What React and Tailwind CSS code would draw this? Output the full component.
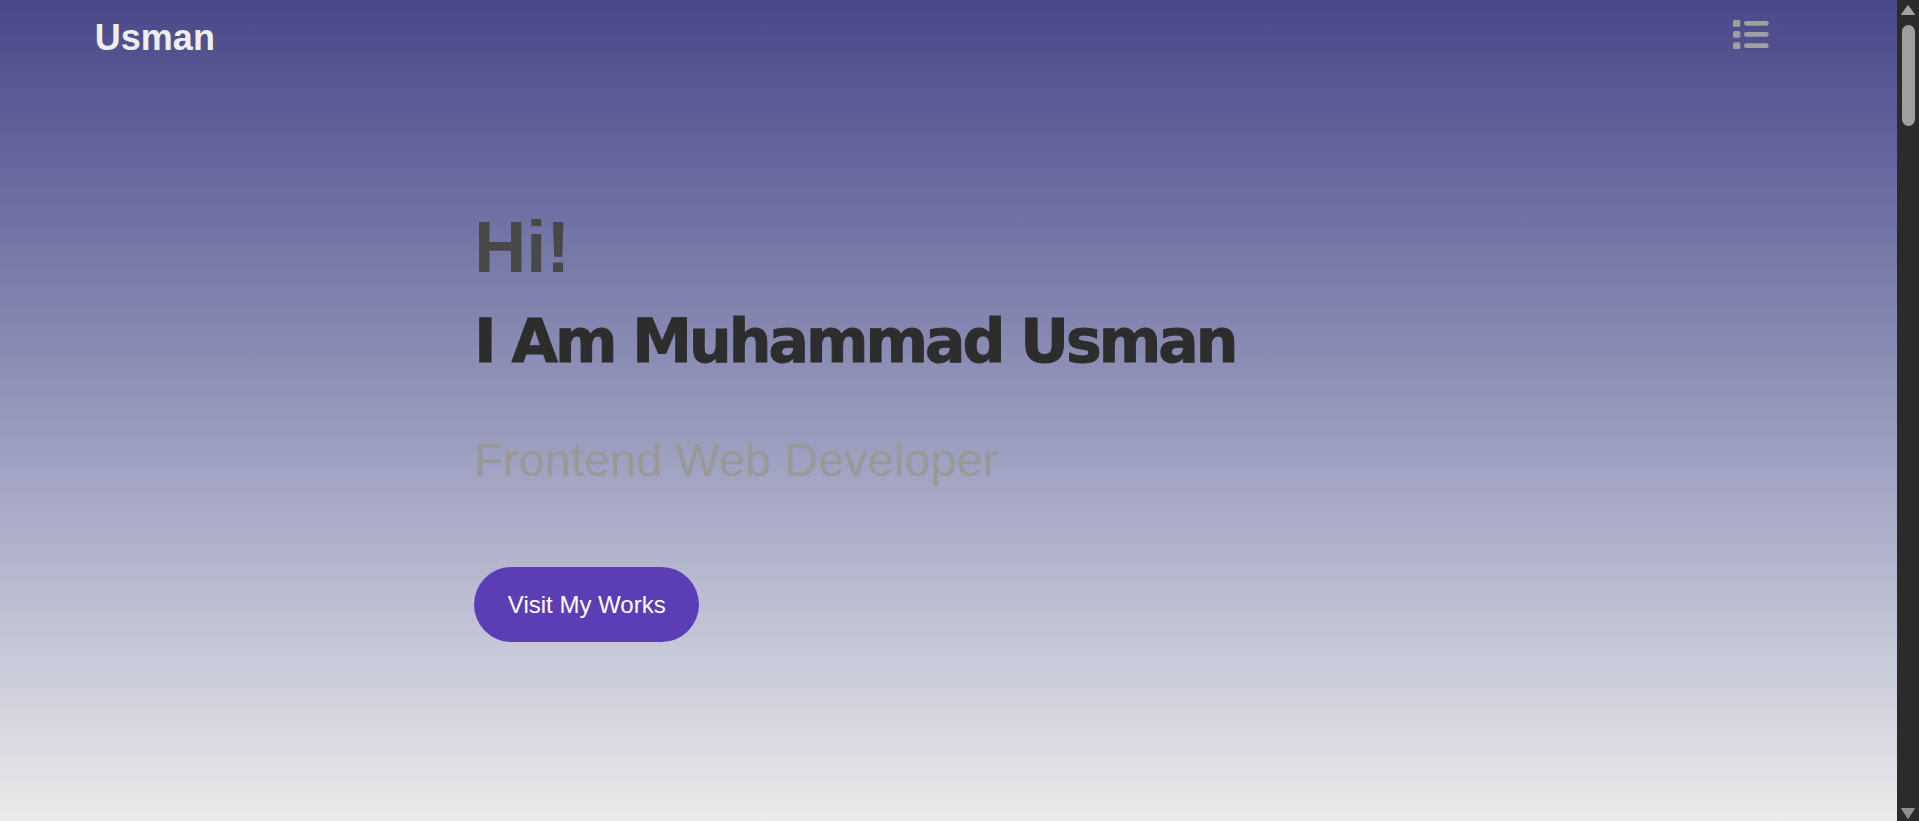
import React from 'react'

function MenuIcon() {
  return (
    <svg width="36" height="29" viewBox="0 0 36 29" fill="#a0a0a0" aria-hidden="true">
      <rect x="0" y="0" width="7.3" height="6.7" rx="1.5" />
      <rect x="0" y="11" width="7.3" height="6.7" rx="1.5" />
      <rect x="0" y="22.3" width="7.3" height="6.7" rx="1.5" />
      <rect x="11" y="1" width="24.7" height="4.7" rx="2.35" />
      <rect x="11" y="12" width="24.7" height="4.7" rx="2.35" />
      <rect x="11" y="23.3" width="24.7" height="4.7" rx="2.35" />
    </svg>
  )
}

// the page scrollbar, as it shows in the shot
function Scrollbar() {
  return (
    <div className="flex w-[22px] shrink-0 flex-col items-center bg-[#2b2b2b] pt-[5px] pb-[2px]">
      <svg width="14" height="10" viewBox="0 0 14 10" fill="#a3a3a3" aria-hidden="true">
        <path d="M7 0.5 L13.5 9.5 L0.5 9.5 Z" strokeLinejoin="round" stroke="#a3a3a3" strokeWidth="1" />
      </svg>
      <div className="mt-[10px] h-[101px] w-[13px] rounded-full bg-[#9f9f9f]"></div>
      <div className="flex-1"></div>
      <svg width="14" height="11" viewBox="0 0 14 11" fill="#8f8f8f" aria-hidden="true">
        <path d="M0.5 0.5 L13.5 0.5 L7 10.5 Z" strokeLinejoin="round" stroke="#8f8f8f" strokeWidth="1" />
      </svg>
    </div>
  )
}

export default function App() {
  return (
    <div className="flex h-screen font-['Liberation_Sans',Arial,sans-serif]">
      <div className="flex-1 overflow-y-auto [scrollbar-width:none]">
        {/* Hero */}
        <section className="h-screen bg-linear-to-b from-[#4a4889] to-[#ebebeb]">
          <nav className="flex items-start justify-between pl-[5%] pr-[128px] pt-[20px]">
            <a href="#" className="text-[36px] leading-none font-bold text-[#eeeeee]">Usman</a>
            <button className="leading-none">
              <MenuIcon />
            </button>
          </nav>

          <div className="pl-[25%] mt-[155px]">
            <h3 className="text-[72px] leading-none font-bold text-[#484848]">Hi!</h3>
            <h1 className="mt-[28px] text-[60px] leading-none font-bold tracking-[-3px] text-[#2d2d2d] [-webkit-text-stroke:1px_#2d2d2d] font-['DejaVu_Sans',sans-serif]">
              I Am Muhammad Usman
            </h1>
            <h2 className="mt-[65px] text-[47px] leading-none text-[#999999]">Frontend Web Developer</h2>
            <a
              href="#"
              className="mt-[84px] flex h-[75px] w-[225px] items-center justify-center rounded-full bg-[#5b3db5] text-[24px] text-white"
            >
              Visit My Works
            </a>
          </div>
        </section>

        {/* rest of page */}
        <section className="h-[5580px] bg-[#ebebeb]"></section>
      </div>
      <Scrollbar />
    </div>
  )
}
